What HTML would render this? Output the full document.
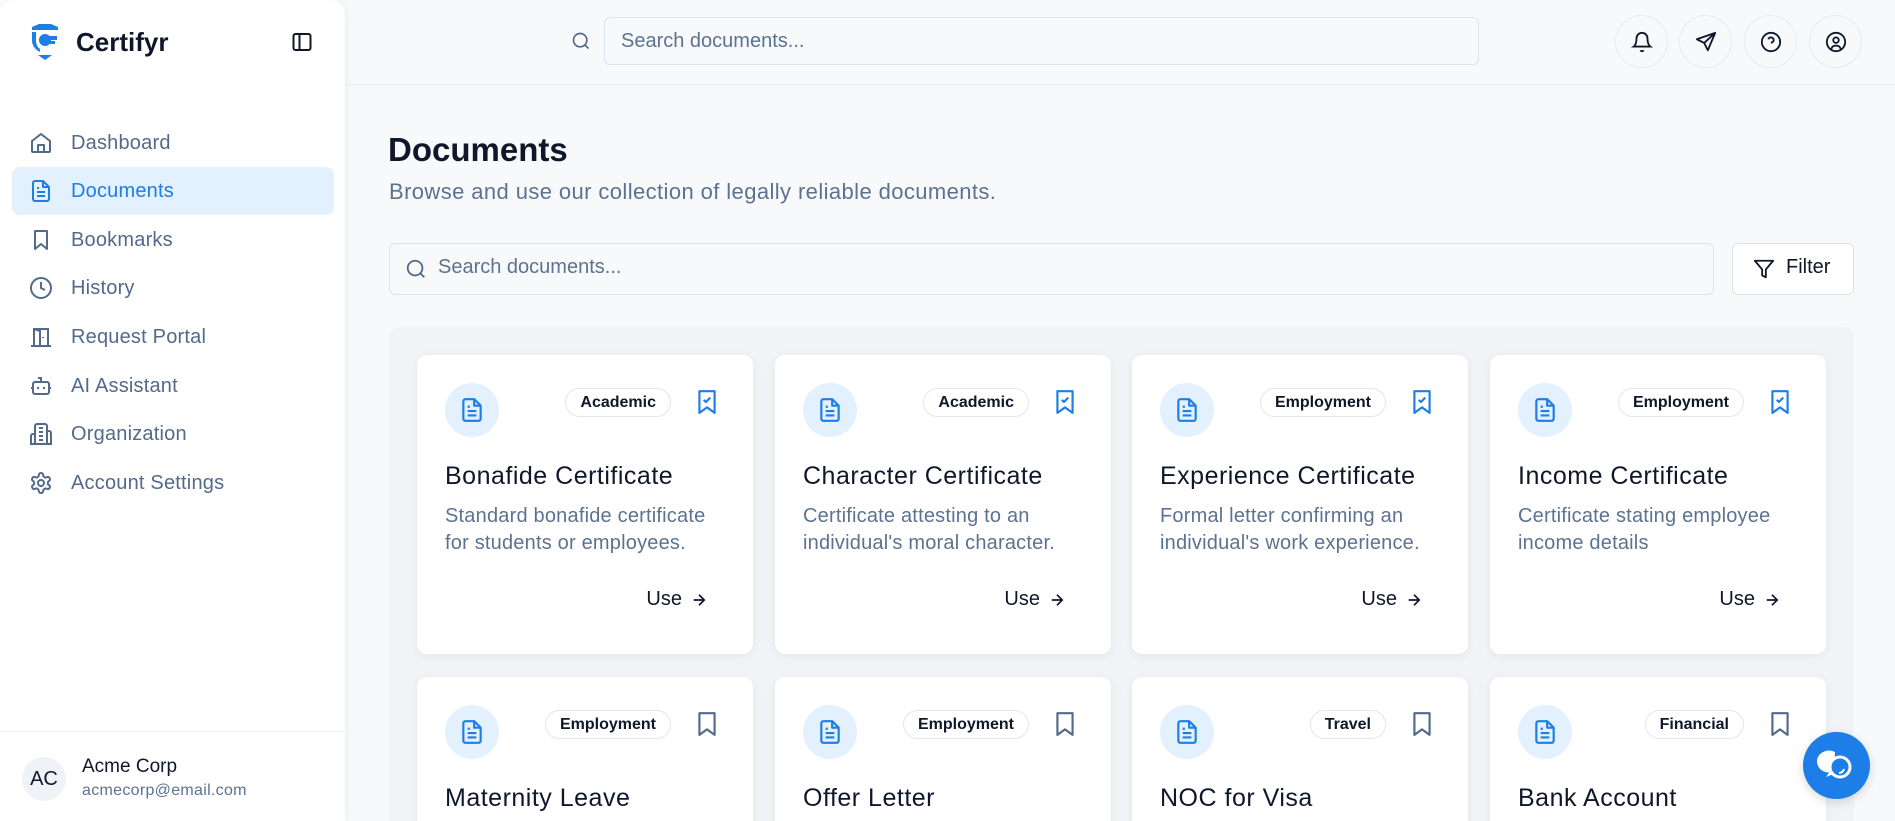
<!DOCTYPE html>
<html><head><meta charset="utf-8"><style>
*{box-sizing:border-box;margin:0;padding:0}
html,body{width:1895px;height:821px;overflow:hidden}
body{background:#f7f9fb;font-family:"Liberation Sans",sans-serif;position:relative;color:#0f172a}
#wrap{position:absolute;left:0;top:0;width:1895px;height:821px;overflow:hidden}
.sb{position:absolute;left:0;top:0;width:345px;height:821px;background:#fff;border-radius:14px 14px 0 0;box-shadow:2px 0 6px rgba(0,0,0,.04);z-index:2}
.abs{position:absolute}
.nav{position:absolute;left:0;width:345px;height:48px;display:flex;align-items:center;font-size:20px;letter-spacing:.2px;color:#536a8a}
.nav svg{position:absolute;left:29px;top:12px}
.nav span{position:absolute;left:71px}
.nav.act{left:12px;width:322px;background:#e3f0fd;border-radius:8px;color:#1c7ee6}
.nav.act svg{left:17px}.nav.act span{left:59px}
.hdr{position:absolute;left:345px;top:0;right:0;height:85px;border-bottom:1px solid #e8eef5}
.circ{position:absolute;top:15px;width:53px;height:53px;border-radius:50%;border:1px solid #e8ebef;background:#f7f9fb;display:flex;align-items:center;justify-content:center}
.card{position:absolute;width:336px;height:299px;background:#fff;border-radius:10px;box-shadow:0 2px 10px rgba(15,23,42,.06)}
.ic{position:absolute;left:28px;top:28px;width:54px;height:54px;border-radius:50%;background:#e3f0fd;display:flex;align-items:center;justify-content:center}
.tag{position:absolute;right:82px;top:33px;height:29px;padding:0 14px;border:1px solid #e2e6ec;border-radius:15px;font-size:16px;font-weight:bold;line-height:27px;color:#0f172a}
.bm{position:absolute;left:277px;top:34px}
.t{position:absolute;left:28px;top:107px;font-size:25px;letter-spacing:.5px;color:#0f172a}
.d{position:absolute;left:28px;top:148px;width:275px;font-size:20px;letter-spacing:.2px;line-height:27px;color:#5d7290}
.use{position:absolute;right:45px;top:233px;font-size:20px;color:#0f172a;display:flex;align-items:center;gap:8px}
</style></head><body><div id="wrap">
<div class="sb">
  <svg class="abs" style="left:29px;top:23px" width="32" height="38" viewBox="0 0 32 38"><path d="M3 4 L10 1 H22 L29 4 V7 H3Z" fill="#1c7ee6"/><path d="M3 9 H7 V18 Q7 23 11 26 L11 29 Q3 25 3 17Z" fill="#1c7ee6"/><circle cx="16" cy="17" r="6" fill="#1c7ee6"/><rect x="16" y="13" width="12" height="4" fill="#1c7ee6"/><rect x="18" y="18" width="8" height="3" fill="#1c7ee6"/><path d="M9 32 H23 L16 37Z" fill="#1c7ee6"/></svg>
  <div class="abs" style="left:76px;top:27px;font-size:26px;font-weight:bold;color:#0f172a">Certifyr</div>
  <svg class="abs" style="left:292px;top:32px" width="20" height="20" viewBox="0 0 20 20" fill="none" stroke="#0f172a" stroke-width="2"><rect x="1.5" y="2" width="17" height="16" rx="2"/><line x1="7.5" y1="2" x2="7.5" y2="18"/></svg>

  <div class="nav" style="top:119px"><svg width="24" height="24" viewBox="0 0 24 24" fill="none" stroke="#536a8a" stroke-width="2" stroke-linejoin="round"><path d="M3 10 L12 3 L21 10 V20 a1 1 0 0 1-1 1H4a1 1 0 0 1-1-1Z"/><path d="M9 21 V14 H15 V21"/></svg><span>Dashboard</span></div>
  <div class="nav act" style="top:167px"><svg width="24" height="24" viewBox="0 0 24 24" fill="none" stroke="#1c7ee6" stroke-width="2" stroke-linejoin="round"><path d="M14 2H6a2 2 0 0 0-2 2v16a2 2 0 0 0 2 2h12a2 2 0 0 0 2-2V8Z"/><path d="M14 2v6h6M8 13h8M8 17h8M8 9h2"/></svg><span>Documents</span></div>
  <div class="nav" style="top:216px"><svg width="24" height="24" viewBox="0 0 24 24" fill="none" stroke="#536a8a" stroke-width="2" stroke-linejoin="round"><path d="M6 3h12v18l-6-5-6 5Z"/></svg><span>Bookmarks</span></div>
  <div class="nav" style="top:264px"><svg width="24" height="24" viewBox="0 0 24 24" fill="none" stroke="#536a8a" stroke-width="2"><circle cx="12" cy="12" r="10"/><path d="M12 6v6l4 2"/></svg><span>History</span></div>
  <div class="nav" style="top:313px"><svg width="24" height="24" viewBox="0 0 24 24" fill="none" stroke="#536a8a" stroke-width="2"><path d="M2 21h20M5 21V4h14v17M5 4l6 2v15M14 12v1"/></svg><span>Request Portal</span></div>
  <div class="nav" style="top:362px"><svg width="24" height="24" viewBox="0 0 24 24" fill="none" stroke="#536a8a" stroke-width="2"><rect x="4" y="8" width="16" height="12" rx="2"/><path d="M12 8V4H9M2 14h2M20 14h2M9 13v2M15 13v2"/></svg><span>AI Assistant</span></div>
  <div class="nav" style="top:410px"><svg width="24" height="24" viewBox="0 0 24 24" fill="none" stroke="#536a8a" stroke-width="2"><path d="M6 22V4a2 2 0 0 1 2-2h8a2 2 0 0 1 2 2v18Z"/><path d="M6 12H4a2 2 0 0 0-2 2v8h4M18 9h2a2 2 0 0 1 2 2v11h-4M10 6h4M10 10h4M10 14h4M10 18h4"/></svg><span>Organization</span></div>
  <div class="nav" style="top:459px"><svg width="24" height="24" viewBox="0 0 24 24" fill="none" stroke="#536a8a" stroke-width="2"><circle cx="12" cy="12" r="3"/><path d="M12.2 2h-.4a2 2 0 0 0-2 2v.2a2 2 0 0 1-1 1.7l-.4.3a2 2 0 0 1-2 0l-.2-.1a2 2 0 0 0-2.7.7l-.2.4a2 2 0 0 0 .7 2.7l.2.1a2 2 0 0 1 1 1.7v.5a2 2 0 0 1-1 1.7l-.2.1a2 2 0 0 0-.7 2.7l.2.4a2 2 0 0 0 2.7.7l.2-.1a2 2 0 0 1 2 0l.4.3a2 2 0 0 1 1 1.7V20a2 2 0 0 0 2 2h.4a2 2 0 0 0 2-2v-.2a2 2 0 0 1 1-1.7l.4-.3a2 2 0 0 1 2 0l.2.1a2 2 0 0 0 2.7-.7l.2-.4a2 2 0 0 0-.7-2.7l-.2-.1a2 2 0 0 1-1-1.7v-.5a2 2 0 0 1 1-1.7l.2-.1a2 2 0 0 0 .7-2.7l-.2-.4a2 2 0 0 0-2.7-.7l-.2.1a2 2 0 0 1-2 0l-.4-.3a2 2 0 0 1-1-1.7V4a2 2 0 0 0-2-2Z"/></svg><span>Account Settings</span></div>

  <div class="abs" style="left:0;top:731px;width:345px;border-top:1px solid #edf0f4"></div>
  <div class="abs" style="left:22px;top:757px;width:44px;height:44px;border-radius:50%;background:#eff2f7;font-size:20px;line-height:44px;text-align:center;color:#0f172a">AC</div>
  <div class="abs" style="left:82px;top:756px;font-size:19px;color:#0f172a">Acme Corp</div>
  <div class="abs" style="left:82px;top:782px;font-size:16px;letter-spacing:.3px;color:#5d7290">acmecorp@email.com</div>
</div>

<div class="hdr">
  <svg class="abs" style="left:226px;top:31px" width="20" height="20" viewBox="0 0 24 24" fill="none" stroke="#536a8a" stroke-width="2"><circle cx="11" cy="11" r="8"/><path d="M21 21l-4.3-4.3"/></svg>
  <div class="abs" style="left:259px;top:17px;width:875px;height:48px;border:1px solid #dde3ea;border-radius:6px;background:#f7f9fb;font-size:20px;color:#5d7290;padding:12px 16px">Search documents...</div>
  <div class="circ" style="left:1270px"><svg width="22" height="22" viewBox="0 0 24 24" fill="none" stroke="#0f172a" stroke-width="2"><path d="M6 8a6 6 0 0 1 12 0c0 7 3 9 3 9H3s3-2 3-9M10.3 21a1.9 1.9 0 0 0 3.4 0"/></svg></div>
  <div class="circ" style="left:1334px"><svg width="22" height="22" viewBox="0 0 24 24" fill="none" stroke="#0f172a" stroke-width="2" stroke-linejoin="round"><path d="M22 2L2 9l8 4 4 8ZM22 2L10 13"/></svg></div>
  <div class="circ" style="left:1399px"><svg width="22" height="22" viewBox="0 0 24 24" fill="none" stroke="#0f172a" stroke-width="2"><circle cx="12" cy="12" r="10"/><path d="M9.1 9a3 3 0 0 1 5.8 1c0 2-3 3-3 3M12 17h.01"/></svg></div>
  <div class="circ" style="left:1464px"><svg width="22" height="22" viewBox="0 0 24 24" fill="none" stroke="#0f172a" stroke-width="2"><circle cx="12" cy="12" r="10"/><circle cx="12" cy="10" r="3"/><path d="M7 20.7v-.7a4 4 0 0 1 4-4h2a4 4 0 0 1 4 4v.7"/></svg></div>
</div>

<div class="abs" style="left:388px;top:131px;font-size:33px;font-weight:bold;color:#0f172a">Documents</div>
<div class="abs" style="left:389px;top:179px;font-size:22px;letter-spacing:.4px;color:#5d7290">Browse and use our collection of legally reliable documents.</div>
<div class="abs" style="left:389px;top:243px;width:1325px;height:52px;border:1px solid #dde3ea;border-radius:6px;background:#f7f9fb"></div>
<svg class="abs" style="left:405px;top:258px" width="22" height="22" viewBox="0 0 24 24" fill="none" stroke="#536a8a" stroke-width="2"><circle cx="11" cy="11" r="8"/><path d="M21 21l-4.3-4.3"/></svg>
<div class="abs" style="left:438px;top:256px;font-size:20px;color:#5d7290">Search documents...</div>
<div class="abs" style="left:1732px;top:243px;width:122px;height:52px;border:1px solid #dde3ea;border-radius:6px;background:#fff"></div>
<svg class="abs" style="left:1753px;top:258px" width="22" height="22" viewBox="0 0 24 24" fill="none" stroke="#0f172a" stroke-width="2" stroke-linejoin="round"><path d="M22 3H2l8 9.5V19l4 2v-8.5Z"/></svg>
<div class="abs" style="left:1786px;top:256px;font-size:20px;color:#0f172a">Filter</div>

<div class="abs" style="left:389px;top:327px;width:1465px;height:520px;background:#f1f3f6;border-radius:10px"></div>

<svg width="0" height="0" style="position:absolute"><defs>
<symbol id="doc" viewBox="0 0 24 24"><g fill="none" stroke="#1c7ee6" stroke-width="2" stroke-linejoin="round"><path d="M14 2H6a2 2 0 0 0-2 2v16a2 2 0 0 0 2 2h12a2 2 0 0 0 2-2V8Z"/><path d="M14 2v6h6M8 13h8M8 17h8M8 9h2"/></g></symbol>
<symbol id="bmc" viewBox="0 0 24 24"><g fill="none" stroke="#1c7ee6" stroke-width="2" stroke-linejoin="round"><path d="M5 2h14v20l-7-5-7 5Z"/><path d="M9 10l2 2 4-4"/></g></symbol>
<symbol id="bmo" viewBox="0 0 24 24"><path d="M5 2h14v20l-7-5-7 5Z" fill="none" stroke="#536a8a" stroke-width="2" stroke-linejoin="round"/></symbol>
</defs></svg>

<div class="card" style="left:417px;top:355px"><div class="ic"><svg width="26" height="26"><use href="#doc"/></svg></div><div class="tag">Academic</div><svg class="bm" width="26" height="26"><use href="#bmc"/></svg><div class="t">Bonafide Certificate</div><div class="d">Standard bonafide certificate for students or employees.</div><div class="use">Use <svg width="18" height="18" viewBox="0 0 24 24" fill="none" stroke="#0f172a" stroke-width="2.2"><path d="M5 12h14M12 5l7 7-7 7"/></svg></div></div>
<div class="card" style="left:775px;top:355px"><div class="ic"><svg width="26" height="26"><use href="#doc"/></svg></div><div class="tag">Academic</div><svg class="bm" width="26" height="26"><use href="#bmc"/></svg><div class="t">Character Certificate</div><div class="d">Certificate attesting to an individual's moral character.</div><div class="use">Use <svg width="18" height="18" viewBox="0 0 24 24" fill="none" stroke="#0f172a" stroke-width="2.2"><path d="M5 12h14M12 5l7 7-7 7"/></svg></div></div>
<div class="card" style="left:1132px;top:355px"><div class="ic"><svg width="26" height="26"><use href="#doc"/></svg></div><div class="tag">Employment</div><svg class="bm" width="26" height="26"><use href="#bmc"/></svg><div class="t">Experience Certificate</div><div class="d">Formal letter confirming an individual's work experience.</div><div class="use">Use <svg width="18" height="18" viewBox="0 0 24 24" fill="none" stroke="#0f172a" stroke-width="2.2"><path d="M5 12h14M12 5l7 7-7 7"/></svg></div></div>
<div class="card" style="left:1490px;top:355px"><div class="ic"><svg width="26" height="26"><use href="#doc"/></svg></div><div class="tag">Employment</div><svg class="bm" width="26" height="26"><use href="#bmc"/></svg><div class="t">Income Certificate</div><div class="d">Certificate stating employee income details</div><div class="use">Use <svg width="18" height="18" viewBox="0 0 24 24" fill="none" stroke="#0f172a" stroke-width="2.2"><path d="M5 12h14M12 5l7 7-7 7"/></svg></div></div>

<div class="card" style="left:417px;top:677px"><div class="ic"><svg width="26" height="26"><use href="#doc"/></svg></div><div class="tag">Employment</div><svg class="bm" width="26" height="26"><use href="#bmo"/></svg><div class="t">Maternity Leave</div></div>
<div class="card" style="left:775px;top:677px"><div class="ic"><svg width="26" height="26"><use href="#doc"/></svg></div><div class="tag">Employment</div><svg class="bm" width="26" height="26"><use href="#bmo"/></svg><div class="t">Offer Letter</div></div>
<div class="card" style="left:1132px;top:677px"><div class="ic"><svg width="26" height="26"><use href="#doc"/></svg></div><div class="tag">Travel</div><svg class="bm" width="26" height="26"><use href="#bmo"/></svg><div class="t">NOC for Visa</div></div>
<div class="card" style="left:1490px;top:677px"><div class="ic"><svg width="26" height="26"><use href="#doc"/></svg></div><div class="tag">Financial</div><svg class="bm" width="26" height="26"><use href="#bmo"/></svg><div class="t">Bank Account</div></div>

<div class="abs" style="left:1803px;top:732px;width:67px;height:67px;border-radius:50%;background:#1c7ee6;box-shadow:0 3px 10px rgba(0,0,0,.15)"></div>
<svg class="abs" style="left:1813px;top:742px" width="48" height="48" viewBox="0 0 48 48"><path d="M22 10a12 11 0 1 0-6 20.5L13 35l8-3" fill="#fff"/><circle cx="27" cy="25" r="10" fill="#1c7ee6" stroke="#fff" stroke-width="3"/><path d="M31 27a5 5 0 0 1-5 4" fill="none" stroke="#fff" stroke-width="2"/></svg>
</div></body></html>
